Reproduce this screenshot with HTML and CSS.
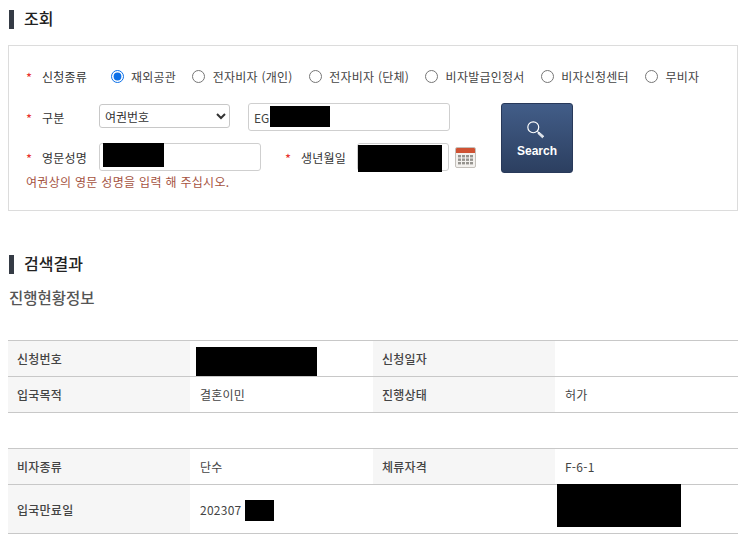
FILE: index.html
```html
<!DOCTYPE html>
<html lang="ko">
<head>
<meta charset="utf-8">
<title>조회</title>
<link rel="stylesheet" href="styles.css">
</head>
<body>
<main class="page">
  <h2 class="section-title">조회</h2>
  <form class="search-panel">
    <div class="search-fields">
      <div class="row row-radio">
        <span class="req">*</span><span class="label label-radio">신청종류</span>
        <div class="radios">
          <label class="radio"><input type="radio" name="kind" checked>재외공관</label>
          <label class="radio"><input type="radio" name="kind">전자비자 (개인)</label>
          <label class="radio"><input type="radio" name="kind">전자비자 (단체)</label>
          <label class="radio"><input type="radio" name="kind">비자발급인정서</label>
          <label class="radio"><input type="radio" name="kind">비자신청센터</label>
          <label class="radio"><input type="radio" name="kind">무비자</label>
        </div>
      </div>
      <div class="row-lower">
        <div class="lower-fields">
          <div class="row row-type">
            <span class="req">*</span><span class="label">구분</span>
            <select class="select"><option>여권번호</option></select>
            <div class="field field-passport"><input class="input" type="text" value="EG"><i class="redact redact-passport"></i></div>
          </div>
          <div class="row row-name">
            <span class="req">*</span><span class="label">영문성명</span>
            <div class="field field-name"><input class="input" type="text"><i class="redact redact-name"></i></div>
            <span class="req req-birth">*</span><span class="label label-birth">생년월일</span>
            <div class="field field-birth"><input class="input" type="text"><i class="redact redact-birth"></i></div>
            <svg class="calendar" width="21" height="21" viewBox="0 0 21 21" aria-hidden="true">
              <rect x="0.5" y="0.5" width="20" height="20" rx="1.5" fill="#f3f1ee" stroke="#c4c0bb"/>
              <path d="M1 2a1 1 0 0 1 1-1h17a1 1 0 0 1 1 1v4H1z" fill="#cf5233"/>
              <g fill="#96948f">
                <rect x="3" y="8" width="3" height="2.4"/><rect x="7" y="8" width="3" height="2.4"/><rect x="11" y="8" width="3" height="2.4"/><rect x="15" y="8" width="3" height="2.4"/>
                <rect x="3" y="11.5" width="3" height="2.4"/><rect x="7" y="11.5" width="3" height="2.4"/><rect x="11" y="11.5" width="3" height="2.4"/><rect x="15" y="11.5" width="3" height="2.4"/>
                <rect x="3" y="15" width="3" height="2.4"/><rect x="7" y="15" width="3" height="2.4"/><rect x="11" y="15" width="3" height="2.4"/><rect x="15" y="15" width="3" height="2.4"/>
              </g>
            </svg>
          </div>
          <p class="hint">여권상의 영문 성명을 입력 해 주십시오.</p>
        </div>
        <button class="search-btn" type="button">
          <svg width="20" height="20" viewBox="0 0 22 22" fill="none" aria-hidden="true">
            <circle cx="8" cy="8" r="6" stroke="#fff" stroke-width="1.3"/>
            <path d="M12.5 12.5l1.8 1.6" stroke="#fff" stroke-width="1.3"/>
            <path d="M14.2 13.2l5.4 4.6-1.6 1.8-5-4.8z" fill="#dfe4ec" stroke="#fff" stroke-width=".8"/>
          </svg>
          <span>Search</span>
        </button>
      </div>
    </div>
  </form>

  <h2 class="section-title section-title-result">검색결과</h2>
  <h3 class="sub-title">진행현황정보</h3>

  <table class="info-table table-first">
    <tr>
      <th>신청번호</th><td class="cell-redact"><i class="redact redact-appno"></i></td>
      <th>신청일자</th><td></td>
    </tr>
    <tr>
      <th>입국목적</th><td>결혼이민</td>
      <th>진행상태</th><td>허가</td>
    </tr>
  </table>

  <table class="info-table table-second">
    <tr>
      <th>비자종류</th><td>단수</td>
      <th>체류자격</th><td>F-6-1</td>
    </tr>
    <tr class="row-tall">
      <th>입국만료일</th><td>202307<i class="redact redact-date"></i></td>
      <td class="cell-plain"></td><td class="cell-redact"><i class="redact redact-last"></i></td>
    </tr>
  </table>
</main>
</body>
</html>
```

FILE: styles.css
```css
* { box-sizing: border-box; }
html, body { margin: 0; background: #fff; }
body {
  font-family: "Noto Sans CJK KR", "Noto Sans", sans-serif;
  font-size: 12px;
  letter-spacing: .25px;
  color: #333;
}
.page { width: 730px; margin-left: 8px; padding-top: 10px; height: 554px; overflow: hidden; }

.section-title {
  margin: 0 0 16px 1px;
  padding-left: 10px;
  border-left: 5px solid #353b45;
  height: 19px;
  line-height: 17px;
  font-size: 16px;
  font-weight: 500;
  letter-spacing: 0;
  color: #222;
}
.section-title-result { margin: 44px 0 0 1px; }

.search-panel {
  height: 166px;
  border: 1px solid #dcdcdc;
  padding: 20px 17px 0;
}
.row { display: flex; align-items: center; }
.req { width: 16px; color: #e8322f; font-size: 13px; line-height: 1; padding-top: 3px; flex: none; }
.label { flex: none; width: 57px; color: #333; }
.label-radio { width: 68.5px; }

.row-radio { height: 20px; }
.radios { display: flex; align-items: center; gap: 16px; }
.radio { display: flex; align-items: center; white-space: nowrap; color: #444; }
.radio input {
  width: 13px; height: 13px; margin: 0 7.5px 0 0; accent-color: #0b6fe8;
}

.row-lower { display: flex; margin-top: 17px; }
.lower-fields { width: 475px; }
.row-type { height: 28px; }
.select {
  width: 131px; height: 24px;
  margin-right: 18px;
  border: 1px solid #c8c8c8; border-radius: 3px;
  background: #fff;
  font: inherit; color: #333;
  padding-left: 1px;
  position: relative; top: -1px;
}
.field { position: relative; flex: none; height: 28px; }
.input {
  width: 100%; height: 100%;
  border: 1px solid #cfcfcf; border-radius: 3px;
  padding: 0 5px;
  font: inherit; color: #444;
  background: #fff;
}
.field-passport { width: 202px; }
.field-name { width: 162px; }
.field-birth { width: 92px; }
.row-name { height: 28px; margin-top: 12px; }
.req-birth { margin-left: 24px; }
.label-birth { width: 56px; }
.calendar { flex: none; margin: 0 0 0 6px; }
.hint { margin: 3px 0 0; font-size: 12px; line-height: 16px; letter-spacing: .3px; color: #a5533f; }

.redact { display: block; position: absolute; background: #000; }
.redact-passport { left: 22px; top: 3px; width: 60px; height: 21px; }
.redact-name { left: 4px; top: 0; width: 61px; height: 24px; }
.redact-birth { left: 1px; top: 2px; width: 84px; height: 27px; }

.search-btn {
  flex: none;
  display: flex; flex-direction: column; align-items: center;
  width: 72px; height: 70px;
  padding: 16px 0 0;
  border: 1px solid #28395a; border-radius: 3px;
  background: linear-gradient(#425d88, #2c3f60);
  color: #fff;
  font-family: "Liberation Sans", sans-serif;
  font-size: 12px; font-weight: 700; letter-spacing: 0;
}
.search-btn svg { margin-right: 2px; }
.search-btn span { margin-top: 4px; line-height: 14px; }

.sub-title { margin: 13px 0 0 1px; font-size: 15.5px; line-height: 20px; font-weight: 500; letter-spacing: 0; color: #555; }

.info-table {
  width: 730px;
  table-layout: fixed;
  border-collapse: collapse;
  border-top: 1px solid #c8c8c8;
}
.table-first { margin-top: 33px; }
.table-second { margin-top: 35px; }
.info-table tr { height: 36px; border-bottom: 1px solid #c8c8c8; }
.info-table .row-tall { height: 49px; }
.info-table th, .info-table td { padding: 0 9px; position: relative; }
.info-table th {
  width: 182px; background: #f6f6f6;
  text-align: left; font-weight: 500; color: #444;
}
.info-table td { width: 183px; padding-left: 10px; color: #444; }
.redact-appno { left: 6px; top: 6px; width: 121px; height: 29px; }
.redact-date { left: 55px; top: 15px; width: 29px; height: 21px; }
.redact-last { left: 2px; top: -1px; width: 124px; height: 43px; }
```
